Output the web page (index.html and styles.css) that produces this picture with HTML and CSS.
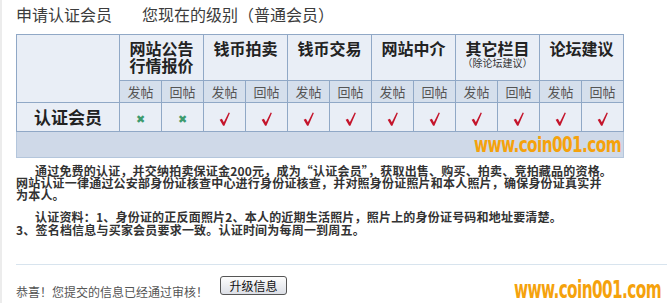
FILE: index.html
```html
<!DOCTYPE html>
<html lang="zh-CN">
<head>
    <meta charset="UTF-8">
    <title>申请认证会员</title>
    <link rel="stylesheet" href="styles.css">
</head>
<body>
    <div class="page">
        <h2 class="title">申请认证会员<span class="level">您现在的级别（普通会员）</span></h2>

        <table class="grid">
            <tr class="head">
                <td class="first" rowspan="2"></td>
                <th colspan="2">网站公告<br>行情报价</th>
                <th colspan="2">钱币拍卖</th>
                <th colspan="2">钱币交易</th>
                <th colspan="2">网站中介</th>
                <th colspan="2">其它栏目<span class="note">（除论坛建议）</span></th>
                <th colspan="2">论坛建议</th>
            </tr>
            <tr class="sub">
                <td>发帖</td><td>回帖</td>
                <td>发帖</td><td>回帖</td>
                <td>发帖</td><td>回帖</td>
                <td>发帖</td><td>回帖</td>
                <td>发帖</td><td>回帖</td>
                <td>发帖</td><td>回帖</td>
            </tr>
            <tr class="data">
                <td class="first name">认证会员</td>
                <td><span class="no">✖</span></td><td><span class="no">✖</span></td>
                <td><svg class="yes" viewBox="0 0 10 13"><path d="M0.5 7.2 L2.6 6.2 L4.4 9.6 L8.9 0.4 L10 0.9 L4.9 12.8 L3.7 12.8 Z"/></svg></td>
                <td><svg class="yes" viewBox="0 0 10 13"><path d="M0.5 7.2 L2.6 6.2 L4.4 9.6 L8.9 0.4 L10 0.9 L4.9 12.8 L3.7 12.8 Z"/></svg></td>
                <td><svg class="yes" viewBox="0 0 10 13"><path d="M0.5 7.2 L2.6 6.2 L4.4 9.6 L8.9 0.4 L10 0.9 L4.9 12.8 L3.7 12.8 Z"/></svg></td>
                <td><svg class="yes" viewBox="0 0 10 13"><path d="M0.5 7.2 L2.6 6.2 L4.4 9.6 L8.9 0.4 L10 0.9 L4.9 12.8 L3.7 12.8 Z"/></svg></td>
                <td><svg class="yes" viewBox="0 0 10 13"><path d="M0.5 7.2 L2.6 6.2 L4.4 9.6 L8.9 0.4 L10 0.9 L4.9 12.8 L3.7 12.8 Z"/></svg></td>
                <td><svg class="yes" viewBox="0 0 10 13"><path d="M0.5 7.2 L2.6 6.2 L4.4 9.6 L8.9 0.4 L10 0.9 L4.9 12.8 L3.7 12.8 Z"/></svg></td>
                <td><svg class="yes" viewBox="0 0 10 13"><path d="M0.5 7.2 L2.6 6.2 L4.4 9.6 L8.9 0.4 L10 0.9 L4.9 12.8 L3.7 12.8 Z"/></svg></td>
                <td><svg class="yes" viewBox="0 0 10 13"><path d="M0.5 7.2 L2.6 6.2 L4.4 9.6 L8.9 0.4 L10 0.9 L4.9 12.8 L3.7 12.8 Z"/></svg></td>
                <td><svg class="yes" viewBox="0 0 10 13"><path d="M0.5 7.2 L2.6 6.2 L4.4 9.6 L8.9 0.4 L10 0.9 L4.9 12.8 L3.7 12.8 Z"/></svg></td>
                <td><svg class="yes" viewBox="0 0 10 13"><path d="M0.5 7.2 L2.6 6.2 L4.4 9.6 L8.9 0.4 L10 0.9 L4.9 12.8 L3.7 12.8 Z"/></svg></td>
            </tr>
            <tr class="foot">
                <td colspan="13"><span class="mark">www.coin001.com</span></td>
            </tr>
        </table>

        <div class="intro">
            <p>通过免费的认证，并交纳拍卖保证金200元，成为“认证会员”，获取出售、购买、拍卖、竞拍藏品的资格。<br>网站认证一律通过公安部身份证核查中心进行身份证核查，并对照身份证照片和本人照片，确保身份证真实并<br>为本人。</p>
            <p>认证资料：1、身份证的正反面照片2、本人的近期生活照片，照片上的身份证号码和地址要清楚。<br>3、签名档信息与买家会员要求一致。认证时间为每周一到周五。</p>
        </div>

        <div class="status">
            <span class="msg">恭喜！您提交的信息已经通过审核！</span>
            <button class="btn">升级信息</button>
            <span class="mark big">www.coin001.com</span>
        </div>
    </div>
</body>
</html>
```

FILE: styles.css
```css
body {
    margin: 0;
    background-color: #fff;
    font-family: "Noto Sans CJK SC", "DejaVu Sans", sans-serif;
    color: #333;
}

.page {
    width: 667px;
    height: 303px;
    padding-left: 14px;
    box-sizing: border-box;
    border-left: 2px solid #ececec;
    overflow: hidden;
}

.title {
    margin: 0;
    padding-top: 3px;
    height: 34px;
    box-sizing: border-box;
    font-size: 16px;
    font-weight: normal;
    line-height: 22px;
    color: #3c3c3c;
}

.level {
    margin-left: 30px;
}

.grid {
    border-collapse: collapse;
    width: 608px;
    table-layout: fixed;
}

.grid td, .grid th {
    border: 1px solid #90a8c6;
    padding: 0;
    text-align: center;
}

.grid .first {
    width: 102px;
}

.head {
    height: 46px;
}

.head th {
    vertical-align: top;
    padding-top: 5px;
    background-color: #e9eef6;
    font-size: 16px;
    line-height: 17px;
    font-weight: bold;
    color: #222;
}

.head .first {
    background-color: #e9eef6;
}

.note {
    display: block;
    font-size: 10px;
    line-height: 11px;
    font-weight: normal;
    color: #333;
}

.sub {
    height: 22px;
}

.sub td {
    background-color: #d5dfec;
    font-size: 13px;
    line-height: 16px;
    color: #555;
}

.data {
    height: 29px;
}

.data td {
    background-color: #e9eef6;
    line-height: 16px;
}

.data .name {
    font-size: 17px;
    font-weight: bold;
    color: #222;
}

.yes {
    width: 11px;
    height: 14px;
    fill: #c4142b;
    vertical-align: middle;
}

.no {
    font-size: 11px;
    color: #3e9b6e;
}

.foot {
    height: 26px;
}

.foot td {
    background-color: #cfd9e8;
    text-align: right;
    border-color: #b4c6dc;
    line-height: 18px;
}

.mark {
    display: inline-block;
    font-family: "DejaVu Sans Condensed", "DejaVu Sans", sans-serif;
    font-weight: bold;
    color: #f5a20c;
    font-size: 17px;
    letter-spacing: -0.6px;
    padding-right: 2px;
    transform: scaleY(1.2);
}

.intro {
    padding-top: 7px;
}

.intro p {
    margin: 0 0 9px;
    font-size: 12px;
    line-height: 12px;
    font-weight: bold;
    letter-spacing: 0.2px;
    text-indent: 19px;
    white-space: nowrap;
    color: #333;
}

.intro p + p {
    line-height: 13px;
    margin-bottom: 0;
}

.status {
    margin-top: 28px;
    border-top: 1px solid #d8e4ee;
    display: flex;
    align-items: flex-start;
    padding-top: 11px;
}

.msg {
    margin-top: 8px;
    font-size: 12px;
    line-height: 16px;
    color: #555;
}

.btn {
    margin-left: 12px;
    width: 67px;
    height: 19px;
    padding: 0;
    font-family: "Noto Sans CJK SC", sans-serif;
    font-size: 12px;
    line-height: 14px;
    color: #111;
    background: linear-gradient(#fdfdfd, #dcdfe6);
    border: 1px solid #555;
    border-radius: 3px;
}

.mark.big {
    margin-left: auto;
    margin-right: 4px;
    margin-top: 3px;
    font-size: 17px;
    transform: scaleY(1.5);
}
```
